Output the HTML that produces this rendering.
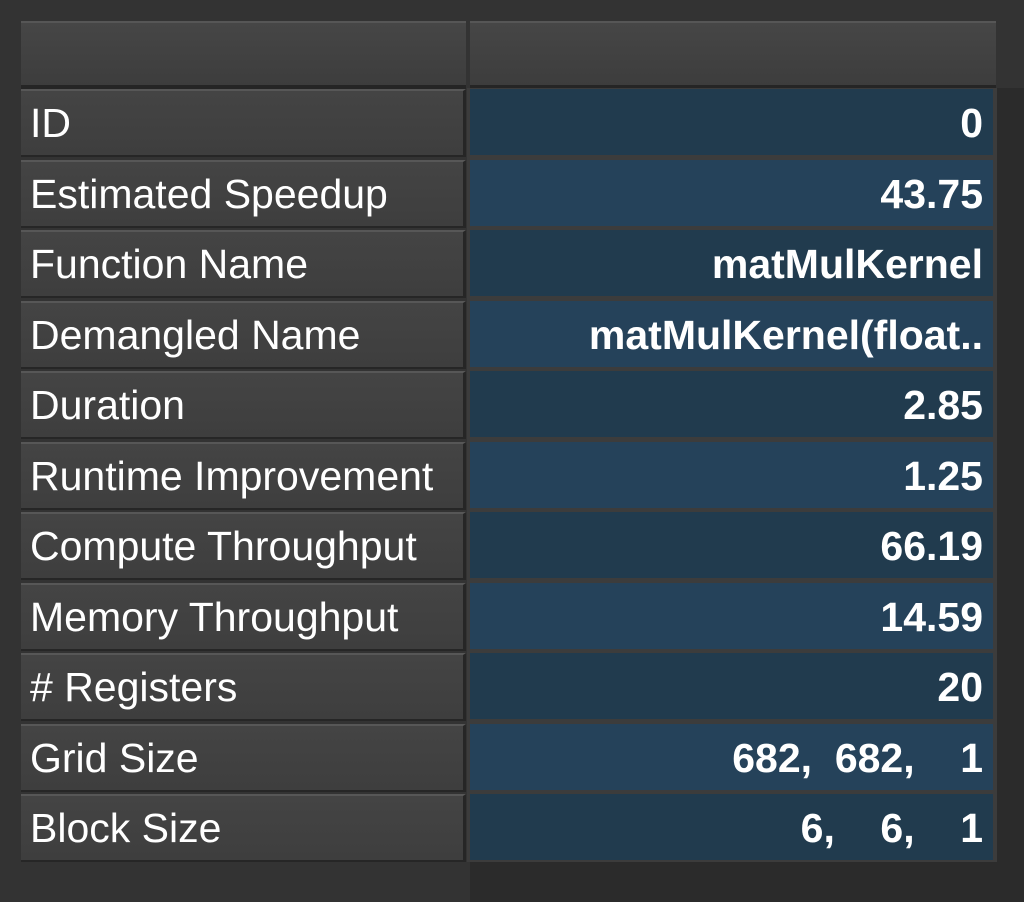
<!DOCTYPE html>
<html><head><style>
html,body{margin:0;padding:0;}
body{width:1024px;height:902px;background:#333;position:relative;overflow:hidden;font-family:"Liberation Sans",Arial,sans-serif;}
.br{position:absolute;left:470px;top:862px;width:554px;height:40px;background:#2b2b2b;}
.br2{position:absolute;left:997px;top:88px;width:27px;height:814px;background:#2b2b2b;}
.hdr{position:absolute;top:21px;height:62px;background:linear-gradient(#464646,#3d3d3d);border-top:2px solid #565656;border-bottom:5px solid #252525;box-sizing:content-box;}
.panel{position:absolute;left:467px;top:88px;width:530px;height:774px;background:#3c3c3c;}
.lc{position:absolute;left:21px;width:442px;height:64px;background:linear-gradient(#444,#3e3e3e);border-top:2px solid #575757;border-bottom:2px solid #262626;border-right:3px solid #262626;color:#fff;font-size:41px;line-height:64px;padding-left:9px;box-sizing:content-box;width:433px;white-space:nowrap;}
.rc{position:absolute;left:470px;width:523px;height:66px;color:#fff;font-weight:bold;font-size:41px;line-height:68px;text-align:right;box-sizing:border-box;padding-right:10px;white-space:pre;}
.a{background:#213b4e}.b{background:#25425a}
</style></head><body>
<div class="br"></div><div class="br2"></div>
<div class="hdr" style="left:21px;width:445px"></div>
<div class="hdr" style="left:470px;width:526px"></div>
<div class="panel"></div>

<div class="lc" style="top:89px">ID</div><div class="rc a" style="top:89px">0</div>
<div class="lc" style="top:159.5px">Estimated Speedup</div><div class="rc b" style="top:159.5px">43.75</div>
<div class="lc" style="top:230px">Function Name</div><div class="rc a" style="top:230px">matMulKernel</div>
<div class="lc" style="top:300.5px">Demangled Name</div><div class="rc b" style="top:300.5px">matMulKernel(float..</div>
<div class="lc" style="top:371px">Duration</div><div class="rc a" style="top:371px">2.85</div>
<div class="lc" style="top:441.5px">Runtime Improvement</div><div class="rc b" style="top:441.5px">1.25</div>
<div class="lc" style="top:512px">Compute Throughput</div><div class="rc a" style="top:512px">66.19</div>
<div class="lc" style="top:582.5px">Memory Throughput</div><div class="rc b" style="top:582.5px">14.59</div>
<div class="lc" style="top:653px"># Registers</div><div class="rc a" style="top:653px">20</div>
<div class="lc" style="top:723.5px">Grid Size</div><div class="rc b" style="top:723.5px">682,  682,    1</div>
<div class="lc" style="top:794px">Block Size</div><div class="rc a" style="top:794px">6,    6,    1</div>
</body></html>
